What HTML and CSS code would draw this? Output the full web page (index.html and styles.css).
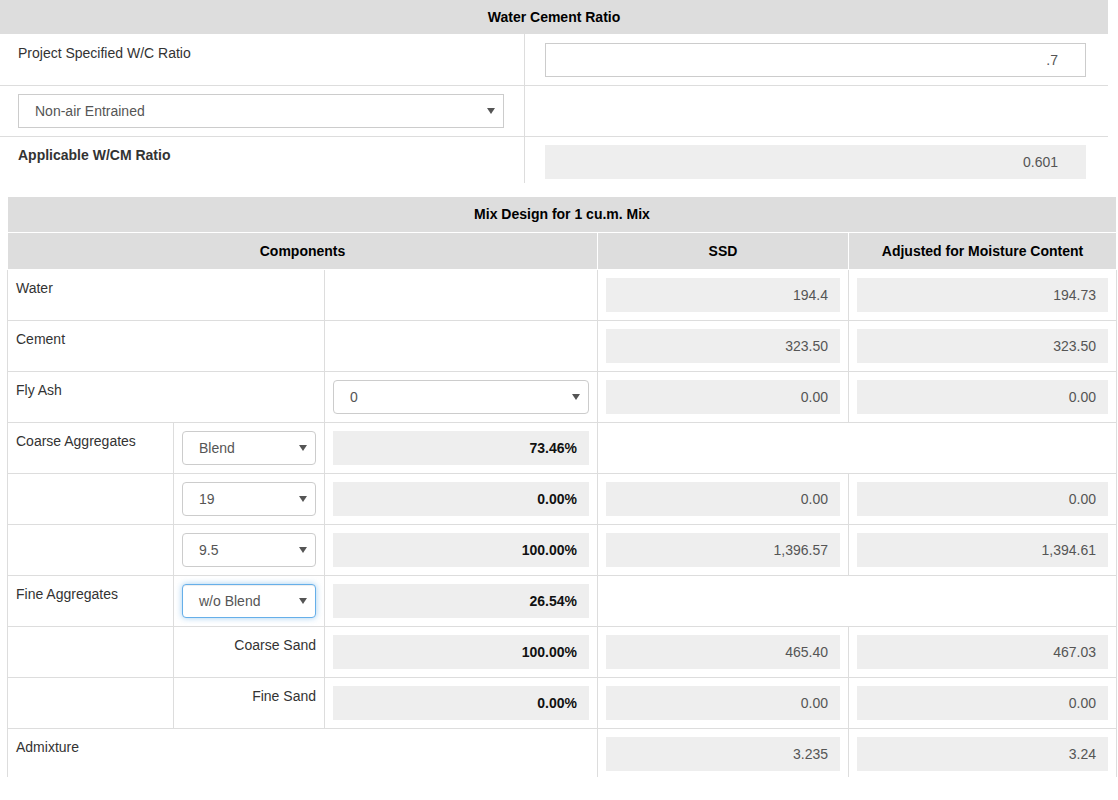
FILE: index.html
```html
<!DOCTYPE html>
<html>
<head>
<meta charset="utf-8">
<title>Mix Design</title>
<link rel="stylesheet" href="styles.css">
</head>
<body>
<table class="wc">
  <colgroup><col class="wc-l"><col class="wc-r"></colgroup>
  <tr><th colspan="2" class="wc-head">Water Cement Ratio</th></tr>
  <tr class="wc-row first">
    <td class="wc-left">Project Specified W/C Ratio</td>
    <td class="wc-right"><div class="field text wide">.7</div></td>
  </tr>
  <tr class="wc-row">
    <td class="wc-left"><div class="select square"><span>Non-air Entrained</span><svg class="caret" width="8" height="6" viewBox="0 0 8 6"><path d="M0 0H8L4 6Z"/></svg></div></td>
    <td class="wc-right"></td>
  </tr>
  <tr class="wc-row last">
    <td class="wc-left strong">Applicable W/CM Ratio</td>
    <td class="wc-right"><div class="field ro wide">0.601</div></td>
  </tr>
</table>

<table class="mix">
  <colgroup><col class="c1"><col class="c2"><col class="c3"><col class="c4"><col class="c5"></colgroup>
  <tr><th colspan="5">Mix Design for 1 cu.m. Mix</th></tr>
  <tr class="subhead"><th colspan="3">Components</th><th>SSD</th><th>Adjusted for Moisture Content</th></tr>
  <tr>
    <td colspan="2">Water</td><td></td>
    <td><div class="field ro">194.4</div></td><td><div class="field ro">194.73</div></td>
  </tr>
  <tr>
    <td colspan="2">Cement</td><td></td>
    <td><div class="field ro">323.50</div></td><td><div class="field ro">323.50</div></td>
  </tr>
  <tr>
    <td colspan="2">Fly Ash</td>
    <td><div class="select round"><span>0</span><svg class="caret" width="8" height="6" viewBox="0 0 8 6"><path d="M0 0H8L4 6Z"/></svg></div></td>
    <td><div class="field ro">0.00</div></td><td><div class="field ro">0.00</div></td>
  </tr>
  <tr>
    <td>Coarse Aggregates</td>
    <td><div class="select round"><span>Blend</span><svg class="caret" width="8" height="6" viewBox="0 0 8 6"><path d="M0 0H8L4 6Z"/></svg></div></td>
    <td><div class="field ro pct">73.46%</div></td>
    <td colspan="2"></td>
  </tr>
  <tr>
    <td></td>
    <td><div class="select round"><span>19</span><svg class="caret" width="8" height="6" viewBox="0 0 8 6"><path d="M0 0H8L4 6Z"/></svg></div></td>
    <td><div class="field ro pct">0.00%</div></td>
    <td><div class="field ro">0.00</div></td><td><div class="field ro">0.00</div></td>
  </tr>
  <tr>
    <td></td>
    <td><div class="select round"><span>9.5</span><svg class="caret" width="8" height="6" viewBox="0 0 8 6"><path d="M0 0H8L4 6Z"/></svg></div></td>
    <td><div class="field ro pct">100.00%</div></td>
    <td><div class="field ro">1,396.57</div></td><td><div class="field ro">1,394.61</div></td>
  </tr>
  <tr>
    <td>Fine Aggregates</td>
    <td><div class="select round focus"><span>w/o Blend</span><svg class="caret" width="8" height="6" viewBox="0 0 8 6"><path d="M0 0H8L4 6Z"/></svg></div></td>
    <td><div class="field ro pct">26.54%</div></td>
    <td colspan="2"></td>
  </tr>
  <tr>
    <td></td>
    <td class="right">Coarse Sand</td>
    <td><div class="field ro pct">100.00%</div></td>
    <td><div class="field ro">465.40</div></td><td><div class="field ro">467.03</div></td>
  </tr>
  <tr>
    <td></td>
    <td class="right">Fine Sand</td>
    <td><div class="field ro pct">0.00%</div></td>
    <td><div class="field ro">0.00</div></td><td><div class="field ro">0.00</div></td>
  </tr>
  <tr class="lastrow">
    <td colspan="3">Admixture</td>
    <td><div class="field ro">3.235</div></td><td><div class="field ro">3.24</div></td>
  </tr>
</table>
</body>
</html>
```

FILE: styles.css
```css
html, body {
  margin: 0;
  padding: 0;
  background: #fff;
}
body {
  font-family: "Liberation Sans", Arial, Helvetica, sans-serif;
  font-size: 14px;
  line-height: 20px;
  color: #333;
}
table {
  border-collapse: collapse;
  table-layout: fixed;
  border-spacing: 0;
}

/* ---------- Water Cement Ratio ---------- */
.wc {
  width: 1108px;
}
.wc-l { width: 524px; }
.wc-r { width: 584px; }
.wc-head {
  background: #ddd;
  font-weight: bold;
  color: #000;
  text-align: center;
  height: 34px;
  padding: 0 8px;
  box-sizing: border-box;
}
.wc-row td {
  border-top: 1px solid #ddd;
  vertical-align: top;
  padding-top: 8px;
  padding-bottom: 8px;
}
.wc-row.first td {
  border-top: 0;
  padding-top: 9px;
}
.wc-row.last td {
  padding-bottom: 4px;
}
.wc-left {
  border-right: 1px solid #ddd;
  padding-left: 18px;
  padding-right: 20px;
}
.wc-right {
  padding-left: 20px;
  padding-right: 22px;
}
.strong {
  font-weight: bold;
}

/* ---------- form fields ---------- */
.field {
  box-sizing: border-box;
  height: 34px;
  line-height: 20px;
  padding: 7px 12px;
  text-align: right;
  color: #555;
}
.field.text {
  border: 1px solid #ccc;
  padding: 6px 27px 6px 12px;
  background: #fff;
}
.field.ro {
  background: #eee;
}
.field.ro.wide {
  padding-right: 28px;
}
.field.pct {
  font-weight: bold;
  color: #111;
}
.select {
  box-sizing: border-box;
  height: 34px;
  display: flex;
  align-items: center;
  justify-content: space-between;
  padding: 0 8px 0 16px;
  border: 1px solid #ccc;
  background: #fff;
  color: #555;
}
.select.round {
  border-radius: 4px;
}
.select.focus {
  border-color: #66afe9;
  box-shadow: inset 0 1px 1px rgba(0, 0, 0, .075), 0 0 6px rgba(102, 175, 233, .6);
}
.caret {
  display: block;
  flex: none;
}
.caret path {
  fill: #555;
}

/* ---------- Mix design table ---------- */
.mix {
  margin: 13px 0 0 7px;
  width: 1109px;
}
.c1 { width: 166px; }
.c2 { width: 151px; }
.c3 { width: 273px; }
.c4 { width: 251px; }
.c5 { width: 268px; }
.mix th {
  background: #ddd;
  color: #000;
  font-weight: bold;
  text-align: center;
  padding: 8px;
  border: 1px solid #fff;
  line-height: 19px;
}
.mix tr.subhead th {
  line-height: 20px;
}
.mix td {
  border: 1px solid #ddd;
  padding: 8px;
  vertical-align: top;
}
.mix td.right {
  text-align: right;
}
.mix tr.lastrow td {
  border-bottom: 0;
  padding-bottom: 6px;
}
```
